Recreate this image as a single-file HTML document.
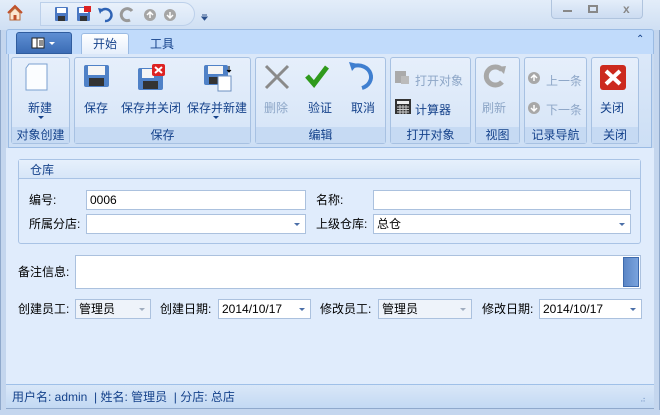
<!DOCTYPE html>
<html><head><meta charset="utf-8"><style>
*{margin:0;padding:0;box-sizing:border-box}
body{width:660px;height:415px;overflow:hidden;font-family:"Liberation Sans","Noto Sans CJK SC",sans-serif;font-size:12px;color:#000;background:#c9daf0;position:relative}
.a{position:absolute}
.grp{position:absolute;top:57px;height:87px;border:1px solid #a7c1e2;border-radius:3px;background:linear-gradient(#e6effb,#d5e4f7)}
.gl{position:absolute;left:0;right:0;bottom:0;height:16px;background:#c6daf3;color:#15428b;text-align:center;font-size:12px;line-height:16px}
.bl{position:absolute;font-size:12px;color:#15428b;white-space:nowrap}
.dis{color:#8da6c7}
.inp{position:absolute;height:20px;background:#fff;border:1px solid #abc1de;font-size:12px;line-height:18px;padding-left:3px}
.cb::after{content:"";position:absolute;right:5px;top:8px;border:3px solid transparent;border-top:3px solid #4b6fa8}
.ro{background:#eef3fa}
.ro::after{border-top-color:#a0adbf}
.lbl{position:absolute;font-size:12px;white-space:nowrap;line-height:14px}
</style></head><body>
<!-- title bar -->
<div class="a" style="left:0;top:0;width:660px;height:30px;background:linear-gradient(#e3edf9,#cfdff3)"></div>
<div class="a" style="left:40px;top:2px;width:155px;height:24px;border-radius:0 12px 12px 0;background:linear-gradient(#e9f1fb,#d7e5f6);border:1px solid #bcd0ea"></div>
<svg class="a" style="left:6px;top:4px" width="18" height="18"><path d="M2 9L9 2l7 7" stroke="#c0502a" stroke-width="2" fill="none"/><path d="M4 9v7h10V9L9 4z" fill="#fbe7d0" stroke="#b86a3a"/><rect x="7.5" y="11" width="3" height="5" fill="#c0502a"/></svg>
<!-- qat icons -->
<svg class="a" style="left:52px;top:5px" width="160" height="20">
<rect x="3" y="2" width="13" height="14" rx="1" fill="#4b78c2"/><rect x="5" y="3" width="9" height="5" fill="#fff"/><rect x="6" y="11" width="7" height="5" fill="#333"/>
<rect x="25" y="2" width="13" height="14" rx="1" fill="#4b78c2"/><rect x="27" y="3" width="9" height="5" fill="#fff"/><rect x="28" y="11" width="7" height="5" fill="#333"/><rect x="32" y="1" width="7" height="6" fill="#d22"/>
<path d="M49 6 a6 6 0 1 1 4 10" stroke="#2e63b5" stroke-width="2.5" fill="none"/><path d="M46 3 l5 1 -3 5z" fill="#2e63b5"/>
<path d="M80 6 a6 6 0 1 0 -2 9" stroke="#999" stroke-width="3" fill="none"/>
<circle cx="98" cy="10" r="6" fill="#a5a5a5"/><circle cx="118" cy="10" r="6" fill="#a5a5a5"/>
<path d="M98 7v6M95 10l3-3 3 3" stroke="#fff" stroke-width="1.5" fill="none"/><path d="M118 7v6M115 10l3 3 3-3" stroke="#fff" stroke-width="1.5" fill="none"/>
<path d="M150 10h5M150 12l2.5 3 2.5-3z" stroke="#2a4f8a" fill="#2a4f8a"/>
</svg>
<!-- window buttons -->
<div class="a" style="left:551px;top:0;width:92px;height:19px;border:1px solid #b0c4de;border-top:0;border-radius:0 0 4px 4px;background:linear-gradient(#e4eefa,#ccdcf1)"></div>
<div class="a" style="left:563px;top:10px;width:9px;height:2px;background:#888"></div>
<div class="a" style="left:588px;top:5px;width:10px;height:8px;border:2px solid #888"></div>
<div class="a" style="left:623px;top:2px;color:#888;font-size:12px;font-weight:bold">x</div>
<!-- tab row -->
<div class="a" style="left:6px;top:29px;width:648px;height:25px;background:#c1dbfb;border:1px solid #9bbbe3;border-bottom:0;border-radius:3px 3px 0 0"></div>
<div class="a" style="left:16px;top:32px;width:56px;height:22px;background:linear-gradient(#5e8fd3,#3b6cb5);border-radius:3px 3px 0 0;border:1px solid #2f5c9e"></div>
<svg class="a" style="left:30px;top:36px" width="30" height="14"><rect x="2" y="2" width="12" height="10" fill="#fff" stroke="#222"/><path d="M7 2v10M9 5h4M9 7h4M9 9h4" stroke="#222"/><path d="M19 6h6l-3 3z" fill="#fff"/></svg>
<div class="a" style="left:81px;top:33px;width:48px;height:22px;background:linear-gradient(#fff,#e4eefb);border:1px solid #9bbbe3;border-bottom:0;border-radius:3px 3px 0 0;text-align:center;line-height:20px;color:#15428b">开始</div>
<div class="a" style="left:150px;top:35px;color:#15428b">工具</div>
<div class="a" style="left:636px;top:34px;color:#15428b;font-size:10px">&#8963;</div>
<!-- ribbon body -->
<div class="a" style="left:8px;top:54px;width:644px;height:94px;background:linear-gradient(#dbe8f9,#cddff5);border:1px solid #9bbbe3;border-top:0"></div>
<div class="grp" style="left:11px;width:59px"><div class="gl">对象创建</div></div>
<div class="grp" style="left:74px;width:177px"><div class="gl">保存</div></div>
<div class="grp" style="left:255px;width:131px"><div class="gl">编辑</div></div>
<div class="grp" style="left:390px;width:81px"><div class="gl">打开对象</div></div>
<div class="grp" style="left:475px;width:45px"><div class="gl">视图</div></div>
<div class="grp" style="left:524px;width:63px"><div class="gl">记录导航</div></div>
<div class="grp" style="left:591px;width:48px"><div class="gl">关闭</div></div>
<svg class="a" style="left:0;top:60px" width="660" height="40">
<path d="M29 4h18v26h-21v-22z" fill="#fbfdff" stroke="#7aa0d0"/>
<g><rect x="84" y="5" width="25" height="22" rx="2" fill="#4f81c7"/><rect x="88" y="6" width="17" height="9" fill="#f5f5f5"/><rect x="89" y="18" width="15" height="8" fill="#333"/></g>
<g><rect x="138" y="8" width="25" height="22" rx="2" fill="#4f81c7"/><rect x="142" y="9" width="12" height="9" fill="#f5f5f5"/><rect x="143" y="21" width="15" height="8" fill="#333"/><rect x="152" y="4" width="13" height="12" rx="2" fill="#d22"/><path d="M155 7l7 6M162 7l-7 6" stroke="#fff" stroke-width="2"/></g>
<g><rect x="204" y="5" width="24" height="20" rx="2" fill="#4f81c7"/><rect x="208" y="6" width="15" height="8" fill="#f5f5f5"/><rect x="209" y="17" width="12" height="7" fill="#333"/><rect x="218" y="16" width="13" height="15" fill="#fff" stroke="#6b8fc0"/><path d="M229 6v6M227 10l2 2 2-2" stroke="#000"/></g>
<path d="M266 6l22 22M288 6l-22 22" stroke="#8a8a8a" stroke-width="3"/>
<path d="M307 16l7 8 13-17" stroke="#2f9a1c" stroke-width="5" fill="none"/>
<path d="M354 6 a9 8 0 1 1 8 22" stroke="#3f7fd0" stroke-width="4" fill="none"/><path d="M349 2l9 2 -6 7z" fill="#3f7fd0"/>
<path d="M502 10 a9 9 0 1 0 0 12" stroke="#a8a8a8" stroke-width="5" fill="none"/><path d="M497 7l9 -1 -2 8z" fill="#a8a8a8"/>
<rect x="600" y="5" width="26" height="25" rx="3" fill="#cc2a1e"/><path d="M606 11l14 13M620 11l-14 13" stroke="#fff" stroke-width="4"/>
</svg>
<div class="bl" style="left:28px;top:99px">新建</div><div class="a" style="left:38px;top:116px;border:3px solid transparent;border-top:3px solid #15428b"></div>
<div class="bl" style="left:84px;top:99px">保存</div>
<div class="bl" style="left:121px;top:99px">保存并关闭</div>
<div class="bl" style="left:187px;top:99px">保存并新建</div><div class="a" style="left:213px;top:116px;border:3px solid transparent;border-top:3px solid #15428b"></div>
<div class="bl dis" style="left:264px;top:99px">删除</div>
<div class="bl" style="left:308px;top:99px">验证</div>
<div class="bl" style="left:351px;top:99px">取消</div>
<svg class="a" style="left:394px;top:70px" width="20" height="50"><rect x="1" y="1" width="11" height="12" fill="#aaa"/><rect x="7" y="6" width="8" height="8" fill="#bbb"/><rect x="1" y="29" width="16" height="15" fill="#333"/><rect x="3" y="31" width="12" height="3" fill="#eee"/><path d="M3 37h12M3 39.5h12M3 42h12M6 35v9M9 35v9M12 35v9" stroke="#ccc"/></svg>
<div class="bl dis" style="left:415px;top:72px">打开对象</div>
<div class="bl" style="left:415px;top:101px">计算器</div>
<div class="bl dis" style="left:482px;top:99px">刷新</div>
<svg class="a" style="left:527px;top:70px" width="16" height="46"><circle cx="7" cy="8" r="6" fill="#a8a8a8"/><circle cx="7" cy="38" r="6" fill="#a8a8a8"/><path d="M7 5v6M4 8l3-3 3 3M7 35v6M4 38l3 3 3-3" stroke="#fff" stroke-width="1.5" fill="none"/></svg>
<div class="bl dis" style="left:546px;top:72px">上一条</div>
<div class="bl dis" style="left:546px;top:101px">下一条</div>
<div class="bl" style="left:600px;top:99px">关闭</div>
<!-- content -->
<div class="a" style="left:6px;top:148px;width:648px;height:236px;background:#e0ecfc"></div>
<div class="a" style="left:18px;top:159px;width:623px;height:85px;border:1px solid #a9c3e5;border-radius:3px;background:#e0ecfc"></div>
<div class="a" style="left:19px;top:160px;width:621px;height:19px;background:linear-gradient(#e6f0fc,#d7e6f8);border-bottom:1px solid #a9c3e5"></div>
<div class="lbl" style="left:30px;top:163px;color:#15428b">仓库</div>
<div class="lbl" style="left:29px;top:193px">编号:</div>
<div class="inp" style="left:86px;top:190px;width:220px">0006</div>
<div class="lbl" style="left:316px;top:193px">名称:</div>
<div class="inp" style="left:373px;top:190px;width:258px"></div>
<div class="lbl" style="left:29px;top:217px">所属分店:</div>
<div class="inp cb" style="left:86px;top:214px;width:220px"></div>
<div class="lbl" style="left:316px;top:217px">上级仓库:</div>
<div class="inp cb" style="left:373px;top:214px;width:258px">总仓</div>
<div class="lbl" style="left:18px;top:265px">备注信息:</div>
<div class="inp" style="left:75px;top:255px;width:566px;height:34px"></div>
<div class="a" style="left:623px;top:257px;width:16px;height:30px;background:linear-gradient(90deg,#5b86c6,#7aa3dd);border:1px solid #3d6aad"></div>
<div class="lbl" style="left:18px;top:302px">创建员工:</div>
<div class="inp cb ro" style="left:75px;top:299px;width:76px">管理员</div>
<div class="lbl" style="left:160px;top:302px">创建日期:</div>
<div class="inp cb" style="left:218px;top:299px;width:93px">2014/10/17</div>
<div class="lbl" style="left:320px;top:302px">修改员工:</div>
<div class="inp cb ro" style="left:378px;top:299px;width:94px">管理员</div>
<div class="lbl" style="left:482px;top:302px">修改日期:</div>
<div class="inp cb" style="left:539px;top:299px;width:103px">2014/10/17</div>
<!-- status -->
<div class="a" style="left:6px;top:384px;width:648px;height:24px;background:linear-gradient(#d9e7f8,#c3d9f3);border-top:1px solid #9fc0e8"></div>
<div class="lbl" style="left:12px;top:390px;color:#15428b">用户名: admin &nbsp;| 姓名: 管理员 &nbsp;| 分店: 总店</div>
<div class="a" style="left:640px;top:395px;color:#7f9fcc;font-size:8px;letter-spacing:-1px">⠴</div>
<div class="a" style="left:0;top:408px;width:660px;height:7px;background:#c4d6ee;border-top:1px solid #8fa9cc"></div>
<div class="a" style="left:0;top:30px;width:6px;height:380px;background:#c4d6ee;border-left:1px solid #8fa9cc"></div>
<div class="a" style="left:654px;top:30px;width:6px;height:380px;background:#c4d6ee;border-right:1px solid #8fa9cc"></div>
</body></html>
